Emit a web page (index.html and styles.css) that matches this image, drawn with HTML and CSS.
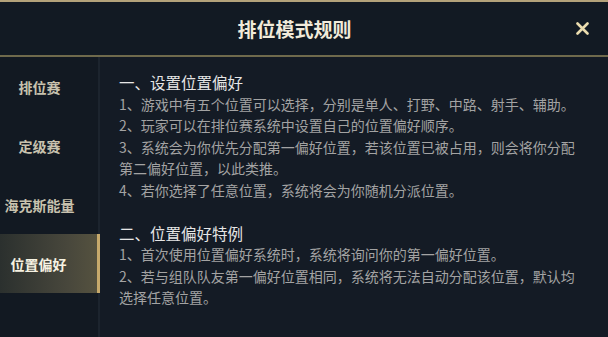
FILE: index.html
```html
<!DOCTYPE html>
<html lang="zh-CN">
  <head>
    <meta charset="utf-8">
    <title>排位模式规则</title>
    <link rel="stylesheet" href="styles.css">
  </head>
  <body>
    <div class="panel">
        <div class="header">
            <h1 class="title">排位模式规则</h1>
            <button class="close-btn">
                <svg width="13" height="13" viewBox="0 0 13 13">
                    <path d="M1.5 1.5 L11.5 11.5 M11.5 1.5 L1.5 11.5" stroke="#eadcae" stroke-width="2.6" stroke-linecap="round"/>
                </svg>
            </button>
        </div>
        <div class="main">
            <div class="sidebar">
                <div class="tab">排位赛</div>
                <div class="tab">定级赛</div>
                <div class="tab">海克斯能量</div>
                <div class="tab active">位置偏好</div>
            </div>
            <div class="content">
                <div class="section">
                    <h2>一、设置位置偏好</h2>
                    <p>1、游戏中有五个位置可以选择，分别是单人、打野、中路、射手、辅助。</p>
                    <p>2、玩家可以在排位赛系统中设置自己的位置偏好顺序。</p>
                    <p>3、系统会为你优先分配第一偏好位置，若该位置已被占用，则会将你分配第二偏好位置，以此类推。</p>
                    <p>4、若你选择了任意位置，系统将会为你随机分派位置。</p>
                </div>
                <div class="section">
                    <h2>二、位置偏好特例</h2>
                    <p>1、首次使用位置偏好系统时，系统将询问你的第一偏好位置。</p>
                    <p>2、若与组队队友第一偏好位置相同，系统将无法自动分配该位置，默认均选择任意位置。</p>
                </div>
            </div>
        </div>
    </div>
  </body>
</html>
```

FILE: styles.css
```css
*{
    margin: 0;
    padding: 0;
    box-sizing: border-box;
}
body{
    background: #131a24;
    font-family: "Noto Sans CJK SC", "Noto Sans", sans-serif;
}
.panel{
    width: 608px;
    height: 337px;
    overflow: hidden;
    background: #141b25;
}
.header{
    height: 57px;
    display: flex;
    align-items: center;
    background: #121a23;
    border-top: 2px solid #b3a27a;
    border-bottom: 2px solid #6f6a4c;
}
.title{
    flex: 1;
    padding-left: 13px;
    text-align: center;
    font-size: 19px;
    font-weight: bold;
    color: #f1ebda;
}
.close-btn{
    width: 13px;
    height: 13px;
    margin-right: 19px;
    border: none;
    background: none;
    display: flex;
}
.main{
    display: flex;
    height: 280px;
}
.sidebar{
    width: 100px;
    background: #121922;
    border-right: 2px solid #1c242e;
}
.tab{
    height: 59px;
    display: flex;
    align-items: center;
    justify-content: center;
    padding-right: 19px;
    font-size: 14px;
    font-weight: bold;
    color: #c8c2ae;
}
.tab.active{
    color: #f7f2e2;
    background: linear-gradient(to right, #2b302e, #48473c 70%, #55523f);
    border-right: 3px solid #c6a96b;
    margin-right: -2px;
    padding-right: 20px;
}
.content{
    flex: 1;
    padding: 15px 0 0 19px;
}
.section{
    width: 466px;
    margin-bottom: 21.5px;
}
.section h2{
    font-size: 15.5px;
    font-weight: normal;
    line-height: 21.5px;
    color: #e6e6e6;
}
.section p{
    font-size: 14px;
    line-height: 21.5px;
    color: #a3a3a3;
}
```
